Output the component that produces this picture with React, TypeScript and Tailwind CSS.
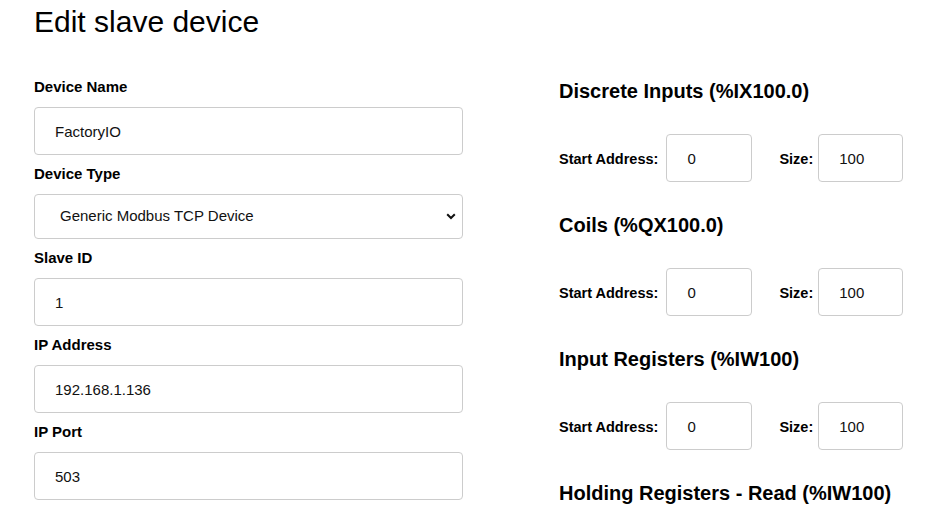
import { useState } from 'react';

type Section = {
  title: string;
  start: string;
  size: string;
};

const sections: Section[] = [
  { title: 'Discrete Inputs (%IX100.0)', start: '0', size: '100' },
  { title: 'Coils (%QX100.0)', start: '0', size: '100' },
  { title: 'Input Registers (%IW100)', start: '0', size: '100' },
  { title: 'Holding Registers - Read (%IW100)', start: '0', size: '100' },
];

const inputCls =
  'block w-full h-[48px] px-[20px] border border-[#cccccc] rounded-[4px] bg-white text-[15px] text-[#111] outline-none';

function Field({ label, value }: { label: string; value: string }) {
  const [val, setVal] = useState(value);
  return (
    <div className="mb-[10px]">
      <label className="block text-[15px] leading-[18px] font-bold text-black mb-[11px]">{label}</label>
      <input className={inputCls} value={val} onChange={(e) => setVal(e.target.value)} />
    </div>
  );
}

export default function App() {
  const [deviceType, setDeviceType] = useState('tcp');

  return (
    <div className="w-[946px] h-[525px] overflow-hidden bg-white px-[34px] font-['Liberation_Sans',Arial,sans-serif] text-black">
      <h1 className="text-[30px] leading-[36px] font-normal mt-[4px]">Edit slave device</h1>

      <div className="flex mt-[38px]">
        {/* left column: device settings */}
        <div className="w-[429px] shrink-0">
          <Field label="Device Name" value="FactoryIO" />

          <div className="mb-[10px]">
            <label className="block text-[15px] leading-[18px] font-bold mb-[11px]">Device Type</label>
            <div className="relative">
              <select
                value={deviceType}
                onChange={(e) => setDeviceType(e.target.value)}
                className="block w-full h-[45px] pl-[25px] pr-[30px] border border-[#cccccc] rounded-[4px] bg-white text-[15px] text-[#111] appearance-none outline-none"
              >
                <option value="tcp">Generic Modbus TCP Device</option>
                <option value="rtu">Generic Modbus RTU Device</option>
              </select>
              <svg
                className="absolute right-[7px] top-[19px] pointer-events-none"
                width="10"
                height="7"
                viewBox="0 0 10 7"
              >
                <path d="M1.2 1.2 L5 5 L8.8 1.2" fill="none" stroke="#111" strokeWidth="2" />
              </svg>
            </div>
          </div>

          <Field label="Slave ID" value="1" />
          <Field label="IP Address" value="192.168.1.136" />
          <Field label="IP Port" value="503" />
        </div>

        {/* right column: address ranges */}
        <div className="ml-[96px] pt-[1px]">
          {sections.map((s) => (
            <div key={s.title}>
              <h2 className="text-[20px] leading-[24px] font-bold mb-[31px] whitespace-nowrap">{s.title}</h2>
              <div className="flex items-center mb-[31px]">
                <span className="text-[14.5px] leading-[18px] pt-[1px] font-bold mr-[8px] whitespace-nowrap">Start Address:</span>
                <input
                  className="w-[86px] h-[48px] px-[20px] border border-[#cccccc] rounded-[4px] text-[15px] text-[#111] outline-none"
                  defaultValue={s.start}
                />
                <span className="text-[14.5px] leading-[18px] pt-[1px] font-bold ml-[27px] mr-[5px]">Size:</span>
                <input
                  className="w-[85px] h-[48px] px-[20px] border border-[#cccccc] rounded-[4px] text-[15px] text-[#111] outline-none"
                  defaultValue={s.size}
                />
              </div>
            </div>
          ))}
        </div>
      </div>
    </div>
  );
}
